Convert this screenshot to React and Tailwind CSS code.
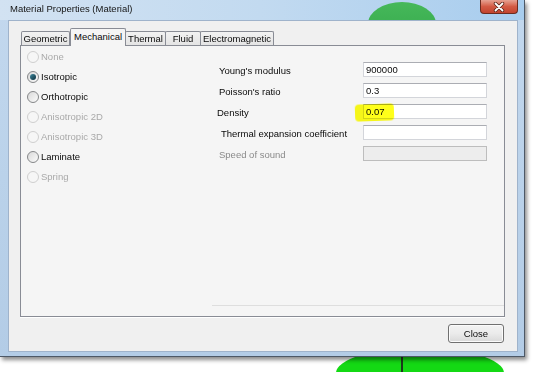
import React from "react";

const font = "font-['Liberation_Sans',Arial,sans-serif]";

function Radio({ label, checked = false, disabled = false }) {
  return (
    <div className="h-[20px] flex items-center pl-[6px] gap-[2px]">
      <span
        className={
          "w-[12px] h-[12px] rounded-full border flex items-center justify-center " +
          (disabled
            ? "border-[#cfcfcf] bg-[#f6f6f6]"
            : "border-[#858789] bg-gradient-to-br from-[#d9d9d9] to-[#fbfbfb]")
        }
      >
        {checked && (
          <span className="w-[6px] h-[6px] rounded-full bg-gradient-to-br from-[#3f8aa0] to-[#0d2f3c]" />
        )}
      </span>
      <span className={"text-[9.5px] leading-none " + (disabled ? "text-[#a9a9a9]" : "text-[#0a0a0a]")}>{label}</span>
    </div>
  );
}

function Tab({ label, w, selected = false }) {
  return (
    <div
      style={{ width: w }}
      className={
        "flex items-center justify-center border border-[#898c95] text-[9.5px] leading-none text-[#0a0a0a] rounded-t-[2px] " +
        (selected
          ? "h-[18px] border-b-0 bg-[#f5f5f5] mb-[-1px] pb-[2px] relative z-10"
          : "h-[14px] border-b-0 bg-gradient-to-b from-[#f2f2f2] to-[#e4e4e4] -ml-px first:ml-0")
      }
    >
      {label}
    </div>
  );
}

function Field({ label, value, disabled = false, labelShift = "" }) {
  return (
    <>
      <div className={"h-[15px] flex items-center text-[9.5px] leading-none relative top-[1.5px] " + labelShift + (disabled ? " text-[#8a8a8a]" : " text-[#0a0a0a]")}>
        {label}
      </div>
      <div
        className={
          "h-[15px] border flex items-center pl-[2px] text-[9.5px] leading-none text-[#0a0a0a] " +
          (disabled
            ? "bg-[#ededed] border-[#bdbdbd]"
            : "bg-white border-[#d3d5da] border-t-[#abadb3]")
        }
      >
        {value}
      </div>
    </>
  );
}

export default function App() {
  return (
    <div className={"relative w-[540px] h-[372px] overflow-hidden bg-white " + font}>
      {/* desktop behind: green tree below window */}
      <div className="absolute left-[336px] top-[348px] w-[168px] h-[50px] rounded-[50%] bg-[#14d914]" />
      <div className="absolute left-[401px] top-[350px] w-[2px] h-[22px] bg-[#1d3b1d]" />

      {/* window */}
      <div className="absolute left-0 top-0 w-[525px] h-[357px] flex flex-col bg-gradient-to-b from-[#c3d8ee] via-[#bad2ea] to-[#b3cce6] border-r border-b border-[#4d5866] shadow-[2px_3px_4px_rgba(0,0,0,0.45)] pl-[8px] pr-[6px] pb-[4px]">
        {/* title bar */}
        <div className="relative h-[20px] -ml-[8px] -mr-[6px] flex items-start overflow-hidden bg-gradient-to-r from-[#d2e2f2] via-[#c2daf0] to-[#a8cdee]">
          <div className="absolute left-[368px] top-[2px] w-[68px] h-[44px] rounded-[50%] bg-gradient-to-b from-[#46b85a] to-[#33a84a]" />
          <span className="relative pl-[10px] pt-[4px] text-[9.5px] leading-none text-[#151515]">Material Properties (Material)</span>
          <div className="relative ml-auto mr-[6px] w-[38px] h-[14px] rounded-b-[4px] border border-t-0 border-[#6b2b1f] bg-gradient-to-b from-[#e6a293] via-[#d35a44] to-[#c2432e] flex items-center justify-center">
            <svg width="12" height="10" viewBox="0 0 12 10">
              <path d="M2.5 1.5 L9.5 8.5 M9.5 1.5 L2.5 8.5" stroke="#5a2418" strokeWidth="3.4" strokeLinecap="round" />
              <path d="M2.5 1.5 L9.5 8.5 M9.5 1.5 L2.5 8.5" stroke="#ffffff" strokeWidth="1.8" strokeLinecap="round" />
            </svg>
          </div>
        </div>

        {/* client area */}
        <div className="flex-1 bg-[#f0f0f0] border border-[#9fb3cb] pl-[11px] pt-[7px] flex flex-col">
          <div className="w-[485px]">
            {/* tab row */}
            <div className="h-[17px] flex items-end pl-[1px]">
              <Tab label="Geometric" w={49} />
              <Tab label="Mechanical" w={56} selected />
              <Tab label="Thermal" w={41} />
              <Tab label="Fluid" w={36} />
              <Tab label="Electromagnetic" w={74} />
            </div>
            {/* panel */}
            <div className="h-[272px] border border-[#898c95] bg-[#f5f5f5] shadow-[0_1px_0_#ffffff] flex">
              <div className="w-[191px] pt-[1px] flex flex-col">
                <Radio label="None" disabled />
                <Radio label="Isotropic" checked />
                <Radio label="Orthotropic" />
                <Radio label="Anisotropic 2D" disabled />
                <Radio label="Anisotropic 3D" disabled />
                <Radio label="Laminate" />
                <Radio label="Spring" disabled />
              </div>
              <div className="flex-1 h-[260px] border-b border-[#dedede] pl-[7px] pt-[16px]">
                <div className="grid grid-cols-[144px_124px] gap-y-[6px]">
                  <Field label="Young's modulus" value="900000" />
                  <Field label="Poisson's ratio" value="0.3" />
                  <div className="h-[15px] flex items-center text-[9.5px] leading-none text-[#0a0a0a] relative top-[1.5px] -left-[2px]">Density</div>
                  <div className="relative h-[15px] border bg-white border-[#d3d5da] border-t-[#abadb3] flex items-center pl-[2px] text-[9.5px] leading-none text-[#0a0a0a]">
                    0.07
                    <div className="absolute -left-[9px] -top-[1px] w-[39px] h-[17px] rounded-[4px] bg-[#ffff1a] mix-blend-multiply blur-[0.4px] -rotate-2" />
                  </div>
                  <Field label="Thermal expansion coefficient" value="" labelShift="left-[2px]" />
                  <Field label="Speed of sound" value="" disabled />
                </div>
              </div>
            </div>
            {/* buttons */}
            <div className="flex justify-end mt-[7px] pr-[1px]">
              <div className="w-[56px] h-[19px] rounded-[3px] border border-[#707070] bg-gradient-to-b from-[#f3f3f3] via-[#ebebeb] to-[#d9d9d9] shadow-[inset_0_0_0_1px_#fbfbfb] flex items-center justify-center text-[9.5px] leading-none text-[#0a0a0a]">
                Close
              </div>
            </div>
          </div>
        </div>
      </div>
    </div>
  );
}
